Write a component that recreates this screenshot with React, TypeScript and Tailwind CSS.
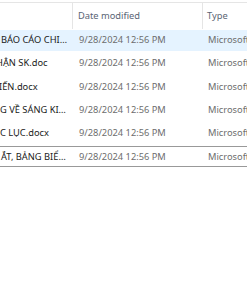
import React from "react";

const rows = [
  { name: "BÁO CÁO CHI…", ml: "ml-[1px]", selected: true, focus: false },
  { name: "HẬN SK.doc", ml: "-ml-[4px]", selected: false, focus: false },
  { name: "IẾN.docx", ml: "-ml-[1px]", selected: false, focus: false },
  { name: "G VỀ SÁNG KI…", ml: "ml-0", selected: false, focus: false },
  { name: "C LỤC.docx", ml: "ml-0", selected: false, focus: false },
  { name: "ẮT, BẢNG BIỂ…", ml: "ml-[1px]", selected: false, focus: true },
];

export default function App() {
  return (
    <div
      className="w-[247px] h-[296px] bg-white overflow-hidden text-[9.3px]"
      style={{ fontFamily: '"Noto Sans", "Open Sans", sans-serif' }}
    >
      <div className="h-[2px]" />
      <div className="h-[27px] border-t border-[#e5e5e5] flex">
        <div className="w-[73px] border-r border-[#e5e5e5]" />
        <div className="w-[130px] border-r border-[#e5e5e5] flex items-center pl-[5px] text-[#5a6474]">
          Date modified
        </div>
        <div className="flex-1 flex items-center pl-[4px] text-[#5a6474]">Type</div>
      </div>
      <div className="flex flex-col gap-[2.3px] pt-[0.5px]">
        {rows.map((r, i) => (
          <div
            key={i}
            className={`h-[21px] flex items-center whitespace-nowrap ${
              r.selected ? "bg-[#e5f3ff]" : ""
            } ${r.focus ? "border-y border-[#999999]" : ""}`}
          >
            <div className="w-[73px] overflow-hidden text-[#1a1a1a]">
              <span className={`inline-block ${r.ml}`}>{r.name}</span>
            </div>
            <div className="w-[130px] pl-[6px] text-[#6d6d6d]">9/28/2024 12:56 PM</div>
            <div className="flex-1 pl-[5px] text-[#6d6d6d] overflow-hidden">Microsoft</div>
          </div>
        ))}
      </div>
    </div>
  );
}
